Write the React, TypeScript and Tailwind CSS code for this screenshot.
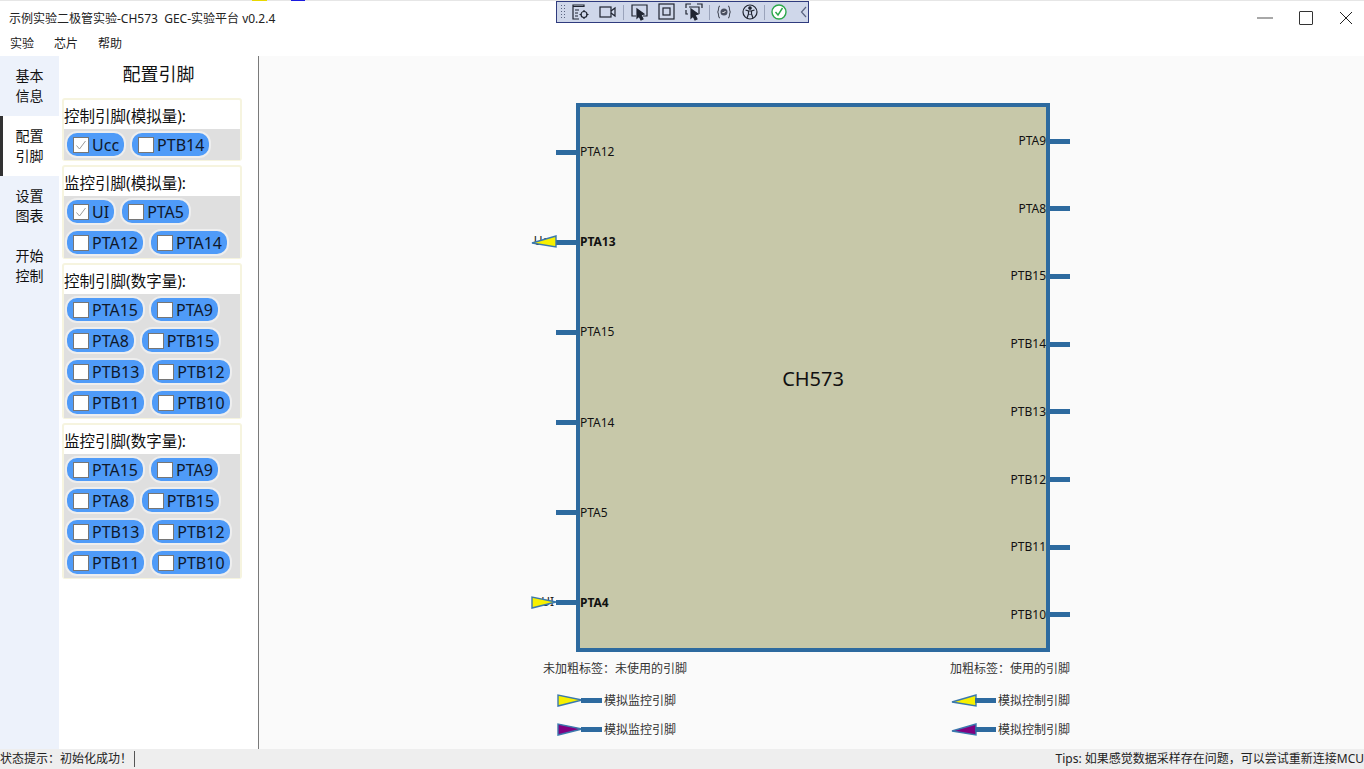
import { ReactNode } from "react";

const FONT = { fontFamily: '"Noto Sans", "Noto Sans CJK SC", sans-serif' };

//
// DATA
//
const groups = [
  { title: "控制引脚(模拟量):", pins: [["Ucc", true], ["PTB14", false]] },
  { title: "监控引脚(模拟量):", pins: [["UI", true], ["PTA5", false], ["PTA12", false], ["PTA14", false]] },
  {
    title: "控制引脚(数字量):",
    pins: [["PTA15", false], ["PTA9", false], ["PTA8", false], ["PTB15", false], ["PTB13", false], ["PTB12", false], ["PTB11", false], ["PTB10", false]],
  },
  {
    title: "监控引脚(数字量):",
    pins: [["PTA15", false], ["PTA9", false], ["PTA8", false], ["PTB15", false], ["PTB13", false], ["PTB12", false], ["PTB11", false], ["PTB10", false]],
  },
] as { title: string; pins: [string, boolean][] }[];

const leftPins = [
  { name: "PTA12" },
  { name: "PTA13", tag: "Ucc", dir: "left" },
  { name: "PTA15" },
  { name: "PTA14" },
  { name: "PTA5" },
  { name: "PTA4", tag: "UI", dir: "right" },
];
const rightPins = ["PTA9", "PTA8", "PTB15", "PTB14", "PTB13", "PTB12", "PTB11", "PTB10"];

//
// SMALL DRAWINGS
//
function Arrow({ dir, fill, className }: { dir: "left" | "right"; fill: string; className?: string }) {
  const points = dir === "left" ? "25,1 25,12 1,8" : "1,1 1,12 25,6";
  return (
    <svg width="26" height="13" viewBox="0 0 26 13" className={className}>
      <polygon points={points} fill={fill} stroke="#3a78ad" strokeWidth="1.4" />
    </svg>
  );
}

function ToolIcon({ w = 18, children }: { w?: number; children: ReactNode }) {
  return (
    <svg width={w} height="18" viewBox={`0 0 ${w} 18`} fill="none" stroke="#1f2430" strokeWidth="1.2" className="shrink-0">
      {children}
    </svg>
  );
}

function Toolbar() {
  return (
    <div className="absolute left-[556px] top-px flex h-[22px] w-[253px] items-center border border-[#2f3b7e] bg-[#cfd7ea]">
      <div className="ml-[3px] h-[16px] w-[6px] bg-[radial-gradient(#5a6480_35%,transparent_40%)] bg-[length:3px_3px]" />
      <div className="ml-[6px]">
        <ToolIcon>
          <path d="M1 2h11v1.5H1zM1 2v14h6M3 7h4M3 10h3M3 13h3" />
          <circle cx="12" cy="11.5" r="3" />
          <path d="M12 7v2M12 14v2M7.500 11.500h2M14.500 11.500h2" />
        </ToolIcon>
      </div>
      <div className="ml-[9px]">
        <ToolIcon>
          <rect x="1" y="4" width="11" height="10" />
          <path d="M12 8l4-3v8l-4-3" />
        </ToolIcon>
      </div>
      <div className="ml-[6px] h-[15px] w-px bg-[#9aa3bb]" />
      <div className="ml-[7px]">
        <ToolIcon>
          <path d="M5 13H1V2h15v11h-4" />
          <path d="M6 6l7 5-3 1 2 4-2 1-2-4-2 2z" fill="#1f2430" />
        </ToolIcon>
      </div>
      <div className="ml-[9px]">
        <ToolIcon>
          <rect x="1" y="1" width="15" height="15" />
          <rect x="5" y="5" width="7" height="7" />
        </ToolIcon>
      </div>
      <div className="ml-[9px]">
        <ToolIcon>
          <path d="M1 5V1h5M12 1h5v4M3 11H1V7M4 4h10v7" />
          <path d="M6 6l7 5-3 1 2 4-2 1-2-4-2 2z" fill="#1f2430" />
        </ToolIcon>
      </div>
      <div className="ml-[6px] h-[15px] w-px bg-[#9aa3bb]" />
      <div className="ml-[6px]">
        <ToolIcon w={16}>
          <path d="M4 3C2 3 3 8 1.500 9 3 10 2 15 4 15M12 3c2 0 1 5 2.500 6-1.500 1-.5 6-2.500 6" strokeWidth="1" />
          <circle cx="8" cy="9" r="3.500" fill="#4a5060" stroke="none" />
          <path d="M6.500 9l1 1 2-2" stroke="#fff" strokeWidth="1" />
        </ToolIcon>
      </div>
      <div className="ml-[10px]">
        <ToolIcon w={16}>
          <circle cx="8" cy="9" r="7" />
          <circle cx="8" cy="5" r="1.200" fill="#1f2430" />
          <path d="M3.500 7l3 1v3l-1.500 4M12.500 7l-3 1v3l1.500 4M6.500 8h3M8 11v1" />
        </ToolIcon>
      </div>
      <div className="ml-[6px] h-[15px] w-px bg-[#9aa3bb]" />
      <div className="ml-[6px]">
        <ToolIcon w={16}>
          <circle cx="8" cy="9" r="7" fill="#fff" stroke="#2ba84a" strokeWidth="1.400" />
          <path d="M4.500 9l2.500 3 4.500-7" stroke="#2ba84a" strokeWidth="1.400" />
        </ToolIcon>
      </div>
      <div className="ml-[13px]">
        <ToolIcon w={8}>
          <path d="M6 4L1.500 9 6 14" stroke="#5a6480" />
        </ToolIcon>
      </div>
    </div>
  );
}

//
// SIDEBAR
//
function NavTab({ label, active }: { label: [string, string]; active?: boolean }) {
  return (
    <div className={`relative flex h-[60px] flex-col items-center justify-center text-[14px] leading-[20px] text-[#111] ${active ? "bg-white" : ""}`}>
      {active && <div className="absolute bottom-0 left-0 top-0 w-[3px] bg-[#333]" />}
      <span>{label[0]}</span>
      <span>{label[1]}</span>
    </div>
  );
}

function PinPill({ name, checked }: { name: string; checked: boolean }) {
  return (
    <div className="flex h-[27px] items-center rounded-[12px] border-2 border-[#eeeeee] bg-[#4f9bf8] pl-[6px] pr-[5px] text-[16px] leading-none text-[#10182a]">
      <span className="flex h-[16px] w-[16px] items-center justify-center border border-[#767676] bg-white">
        {checked && (
          <svg width="12" height="12" viewBox="0 0 12 12" fill="none" stroke="#9b9b9b" strokeWidth="1">
            <path d="M1.500 6.500l3 3.500 6-8" />
          </svg>
        )}
      </span>
      <span className="ml-[3px]">{name}</span>
    </div>
  );
}

function PinGroup({ title, pins }: { title: string; pins: [string, boolean][] }) {
  return (
    <div className="ml-[3px] w-[180px] rounded-[3px] border-2 border-b border-[#f6f4df] bg-white">
      <div className="flex h-[29px] items-center pt-[5px] text-[15.500px] leading-none text-[#111]">{title}</div>
      <div className="flex flex-wrap gap-1 bg-[#dfdfdf] p-[2px] pl-[1px]">
        {pins.map(([name, checked]) => (
          <PinPill key={name} name={name} checked={checked} />
        ))}
      </div>
    </div>
  );
}

function ConfigPanel() {
  return (
    <div className="w-[200px] shrink-0 border-r border-[#7a7a7a] bg-white">
      <div className="flex h-[42px] items-center justify-center pb-[6px] text-[18px] text-[#111]">配置引脚</div>
      <div className="flex flex-col gap-1">
        {groups.map((g) => (
          <PinGroup key={g.title} title={g.title} pins={g.pins} />
        ))}
      </div>
    </div>
  );
}

//
// CHIP DIAGRAM
//
function Stub() {
  return <div className="h-[5px] w-[20px] shrink-0 bg-[#2d6a9f]" />;
}

function Chip() {
  return (
    <div className="ml-[317px] mt-[47px] flex h-[549px] w-[474px] border-4 border-[#2d6a9f] bg-[#c7c8a9] text-[12px] leading-none text-[#111]">
      <div className="-ml-[24px] flex flex-col justify-between py-[35px]">
        {leftPins.map((p) => (
          <div key={p.name} className="relative flex h-[20px] items-center">
            <Stub />
            <span className={`ml-[4px] ${p.tag ? "font-bold" : ""}`}>{p.name}</span>
            {p.tag && (
              <div className="absolute right-full top-[3px] mr-0 flex items-center">
                <span className="mr-[2px] whitespace-nowrap text-[#222]">{p.tag}</span>
              </div>
            )}
            {p.tag && (
              <Arrow
                dir={p.dir as "left" | "right"}
                fill="#f7f000"
                className="absolute right-full top-[3px] -mr-[1px]"
              />
            )}
          </div>
        ))}
      </div>
      <div className="flex flex-1 items-center justify-center pt-[3px] text-[20px] text-[#111]">CH573</div>
      <div className="-mr-[24px] flex flex-col items-end justify-between pb-[23px] pt-[24px]">
        {rightPins.map((name) => (
          <div key={name} className="flex h-[20px] items-center">
            <span className="mr-[4px]">{name}</span>
            <Stub />
          </div>
        ))}
      </div>
    </div>
  );
}

function LegendRow({ dir, fill, text }: { dir: "left" | "right"; fill: string; text: string }) {
  return (
    <div className="flex h-[29px] items-center">
      <Arrow dir={dir} fill={fill} className="-mr-[2px]" />
      <div className="h-[5px] w-[21px] bg-[#2d6a9f]" />
      <span className="ml-[2px]">{text}</span>
    </div>
  );
}

function Legend() {
  return (
    <div className="ml-[284px] mt-[8px] flex w-[527px] justify-between text-[12px] leading-none text-[#333]">
      <div className="flex flex-col">
        <div className="mb-[8px] flex h-[18px] items-center">未加粗标签：未使用的引脚</div>
        <div className="ml-[14px]">
          <LegendRow dir="right" fill="#f7f000" text="模拟监控引脚" />
          <LegendRow dir="right" fill="#800080" text="模拟监控引脚" />
        </div>
      </div>
      <div className="flex flex-col items-end">
        <div className="mb-[8px] flex h-[18px] items-center">加粗标签：使用的引脚</div>
        <LegendRow dir="left" fill="#f7f000" text="模拟控制引脚" />
        <LegendRow dir="left" fill="#800080" text="模拟控制引脚" />
      </div>
    </div>
  );
}

//
// PAGE
//
export default function App() {
  return (
    <div className="relative flex h-[769px] w-[1364px] flex-col overflow-hidden bg-white" style={FONT}>
      {/* window behind */}
      <div className="relative h-px bg-[#e6e6e6]">
        <div className="absolute left-[252px] top-0 h-px w-[15px] bg-[#e8d800]" />
        <div className="absolute left-[291px] top-0 h-px w-[14px] bg-[#1a1ae0]" />
      </div>

      {/* TITLE BAR */}
      <div className="flex h-[33px] items-center justify-between pl-[9px] text-[12px] text-[#222]">
        <span className="whitespace-pre pt-[2px]">示例实验二极管实验-CH573  GEC-实验平台 v0.2.4</span>
        <div className="flex items-center gap-[26px] pr-[11px]">
          <div className="h-[2px] w-[16px] bg-[#a8a8a8]" />
          <div className="h-[14px] w-[14px] rounded-[1px] border border-[#333]" />
          <svg width="14" height="14" viewBox="0 0 14 14" stroke="#222" strokeWidth="1">
            <path d="M1 1l12 12M13 1L1 13" />
          </svg>
        </div>
      </div>

      {/* MENU */}
      <div className="flex h-[22px] items-center gap-5 pb-[3px] pl-[10px] text-[12px] text-[#222]">
        <span>实验</span>
        <span>芯片</span>
        <span>帮助</span>
      </div>

      {/* BODY */}
      <div className="flex min-h-0 flex-1">
        <div className="w-[59px] shrink-0 bg-[#edf2fb]">
          <NavTab label={["基本", "信息"]} />
          <NavTab label={["配置", "引脚"]} active />
          <NavTab label={["设置", "图表"]} />
          <NavTab label={["开始", "控制"]} />
        </div>
        <ConfigPanel />
        <div className="flex-1 bg-[#fafafa]">
          <Chip />
          <Legend />
        </div>
      </div>

      {/* STATUS BAR */}
      <div className="flex h-[20px] items-center justify-between bg-[#eeeeee] text-[12px] text-[#222]">
        <div className="flex items-center">
          <span>状态提示：初始化成功！</span>
          <div className="ml-[2px] h-[16px] w-px bg-[#555]" />
        </div>
        <span>Tips: 如果感觉数据采样存在问题，可以尝试重新连接MCU</span>
      </div>

      <Toolbar />
    </div>
  );
}
